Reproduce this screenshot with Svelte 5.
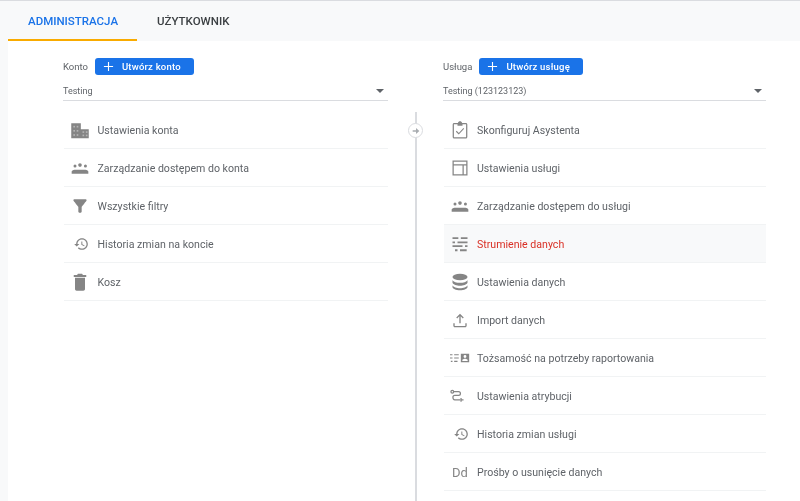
<script>
  const history =
    '<g transform="translate(14 12) scale(.78) translate(-12.500 -12)"><path d="M13 3c-4.970 0-9 4.030-9 9H1l3.890 3.890.07.14L9 12H6c0-3.870 3.130-7 7-7s7 3.130 7 7-3.130 7-7 7c-1.930 0-3.680-.79-4.940-2.060l-1.420 1.420C8.270 19.990 10.510 21 13 21c4.970 0 9-4.030 9-9s-4.030-9-9-9zm-1 5v5l4.280 2.540.72-1.210-3.500-2.080V8H12z"/></g>';
  const people =
    '<circle cx="12" cy="8.500" r="2.200"/><circle cx="6" cy="9.500" r="1.800"/><circle cx="18.500" cy="9.500" r="1.800"/><path d="M2 19v-2.500c0-1.100 1.500-2 3.500-2.300h13c2 .3 3.500 1.200 3.500 2.300V19z"/>';

  const icons = {
    building:
      '<path d="M1.500 4v18h21V11H13V4z"/><g fill="#b4b4b4"><rect x="4" y="7" width="2" height="2"/><rect x="8" y="7" width="2" height="2"/><rect x="4" y="12" width="2" height="2"/><rect x="8" y="12" width="2" height="2"/><rect x="4" y="17" width="2" height="2"/><rect x="8" y="17" width="2" height="2"/><rect x="15" y="13.500" width="2" height="2"/><rect x="19" y="13.500" width="2" height="2"/><rect x="15" y="17.500" width="2" height="2"/><rect x="19" y="17.500" width="2" height="2"/></g>',
    people,
    filter:
      '<path d="M4.250 5.610C6.270 8.200 10 13 10 13v6c0 .55.45 1 1 1h2c.55 0 1-.45 1-1v-6s3.720-4.800 5.740-7.390c.51-.66.04-1.610-.79-1.610H5.040c-.83 0-1.300.95-.79 1.610z"/>',
    history,
    trash:
      '<path d="M6 20.500c0 1.100.9 2 2 2h8c1.100 0 2-.9 2-2V7H6zM19.500 3.500h-4l-1-1.500h-5l-1 1.500h-4V6h15z"/>',
    clipboard:
      '<path d="M19 3.500h-4.500C14.200 2.300 13.200 1.500 12 1.500s-2.200.8-2.500 2H5c-1 0-1.800.8-1.800 1.800v15c0 1 .8 1.800 1.800 1.800h14c1 0 1.800-.8 1.800-1.800v-15c0-1-.8-1.800-1.800-1.800zm.3 17.100H4.700V5H9v2h6V5h4.300z"/><path d="M7.500 13.500l3 3 6-6.500" fill="none" stroke="currentColor" stroke-width="1.300"/>',
    layout:
      '<path d="M3 3h18v18H3zm1.500 1.500v3h15v-3zm0 4.500v10.500h10.500V9zm12 0v10.500h3V9z" fill-rule="evenodd"/>',
    streams:
      '<g fill="none" stroke="currentColor" stroke-width="2.200"><path d="M3 5h7M13 5h8M3 10h3M9 10h12M3 14.500h12M18 14.500h3M6 19.500h3M12 19.500h8"/></g>',
    database:
      '<ellipse cx="12" cy="6" rx="9" ry="4"/><path d="M3 9.500C4 12 8 13 12 13s8-1 9-3.500V13c-1 2.500-5 3.500-9 3.500S4 15.500 3 13zM3 16c1 2.500 5 3.500 9 3.500s8-1 9-3.500v2c0 2.200-4 4-9 4s-9-1.800-9-4z"/>',
    upload:
      '<path d="M12 4.500L7.500 9l1.100 1.100 2.600-2.600V16h1.600V7.500l2.600 2.600L16.500 9zM4 16v3c0 1 .8 1.800 1.800 1.800h12.400c1 0 1.800-.8 1.800-1.800v-3h-1.600v3.200H5.600V16z"/>',
    identity:
      '<g fill="none" stroke="currentColor" stroke-width="1.300"><path d="M0 8h3M5 8h5.500M0 12h3M5 12h5.500M1 16h2M5 16h4"/></g><path fill-rule="evenodd" d="M13 7h10v10H13zm5 1.500a1.700 1.700 0 100 3.400 1.700 1.700 0 000-3.400zM14.800 15.500h6.400v-.8c0-1-2.200-1.700-3.200-1.700s-3.200.7-3.200 1.700z"/>',
    attribution:
      '<g transform="translate(-1 3) scale(.75)"><g fill="none" stroke="currentColor" stroke-width="2"><circle cx="5" cy="5" r="2.200"/><path d="M7.500 5H15c2 0 3 1.300 3 3s-1 3-3 3H9c-2 0-3 1.300-3 3s1 4 3 4h9"/></g><path d="M18 15h2v2h3v2h-3v2h-2z"/></g>'
  };

  const accountItems = [
    { icon: "building", label: "Ustawienia konta" },
    { icon: "people", label: "Zarządzanie dostępem do konta" },
    { icon: "filter", label: "Wszystkie filtry" },
    { icon: "history", label: "Historia zmian na koncie" },
    { icon: "trash", label: "Kosz" }
  ];

  const propertyItems = [
    { icon: "clipboard", label: "Skonfiguruj Asystenta" },
    { icon: "layout", label: "Ustawienia usługi" },
    { icon: "people", label: "Zarządzanie dostępem do usługi" },
    { icon: "streams", label: "Strumienie danych", active: true },
    { icon: "database", label: "Ustawienia danych" },
    { icon: "upload", label: "Import danych" },
    { icon: "identity", label: "Tożsamość na potrzeby raportowania" },
    { icon: "attribution", label: "Ustawienia atrybucji" },
    { icon: "history", label: "Historia zmian usługi" },
    { text: "Dd", label: "Prośby o usunięcie danych" }
  ];

  const columns = [
    { title: "Konto", action: "Utwórz konto", value: "Testing", items: accountItems },
    { title: "Usługa", action: "Utwórz usługę", value: "Testing (123123123)", items: propertyItems }
  ];
</script>

{#snippet column(col)}
  <section class="column">
    <div class="head">
      <span class="title">{col.title}</span>
      <button class="create" type="button">
        <svg class="plus" viewBox="0 0 12 12"><path d="M6 1v10M1 6h10" /></svg>
        {col.action}
      </button>
    </div>
    <div class="picker">
      <span>{col.value}</span>
      <i class="caret"></i>
    </div>
    <ul>
      {#each col.items as item}
        <li class:active={item.active}>
          <span class="icon">
            {#if item.text}
              {item.text}
            {:else}
              <svg viewBox="0 0 24 24" fill="currentColor">{@html icons[item.icon]}</svg>
            {/if}
          </span>
          {item.label}
        </li>
      {/each}
    </ul>
  </section>
{/snippet}

<div class="page">
  <nav class="tabs">
    <a class="tab selected" href="#admin">ADMINISTRACJA</a>
    <a class="tab" href="#user">UŻYTKOWNIK</a>
  </nav>
  <main class="content">
    {@render column(columns[0])}
    <div class="rail">
      <span class="line"></span>
      <span class="arrow">
        <svg viewBox="0 0 12 12"><path d="M2 5h4V2.500L10 6 6 9.500V7H2z" /></svg>
      </span>
    </div>
    {@render column(columns[1])}
  </main>
</div>

<style>
  :global(body) {
    margin: 0;
    background: #f8f9fa;
  }

  .page {
    height: 501px;
    overflow: hidden;
    display: flex;
    flex-direction: column;
    font-family: Roboto, "Liberation Sans", sans-serif;
    color: #5f6368;
    filter: blur(0.5px);
  }

  .tabs {
    height: 41px;
    box-sizing: border-box;
    border-top: 1px solid #dadce0;
    display: flex;
    background: #f8f9fa;
  }

  .tab {
    box-sizing: border-box;
    height: 40px;
    padding: 12px 20px 0;
    font-size: 11.500px;
    font-weight: 500;
    line-height: 16px;
    color: #3c4043;
    text-decoration: none;
  }

  .tab.selected {
    width: 129px;
    margin-left: 8px;
    color: #1a73e8;
    border-bottom: 2px solid #f9ab00;
  }

  .content {
    flex: 1;
    margin-left: 8px;
    padding: 0 34px 0 55px;
    background: #fff;
    display: grid;
    grid-template-columns: 325px 55px 323px;
  }

  .head {
    height: 17px;
    margin-top: 17px;
    display: flex;
    align-items: center;
    gap: 7px;
  }

  .title {
    font-size: 9.500px;
  }

  .create {
    height: 17px;
    display: flex;
    align-items: center;
    padding: 0 13px 0 8px;
    gap: 8px;
    border: 0;
    border-radius: 3px;
    background: #1a73e8;
    color: #fff;
    font: 500 9.500px Roboto, sans-serif;
    letter-spacing: 0.2px;
  }

  .plus {
    width: 11px;
    height: 11px;
    fill: none;
    stroke: #fff;
    stroke-width: 1.200;
  }

  .picker {
    height: 26px;
    box-sizing: border-box;
    border-bottom: 1px solid #dadce0;
    display: flex;
    align-items: center;
    justify-content: space-between;
    padding: 6px 4px 0 0;
    font-size: 9px;
  }

  .caret {
    width: 0;
    height: 0;
    border: solid transparent;
    border-width: 4.500px 4.500px 0;
    border-top-color: #5f6368;
  }

  ul {
    list-style: none;
    margin: 10px 0 0 1px;
    padding: 0;
  }

  li {
    height: 38px;
    box-sizing: border-box;
    border-bottom: 1px solid #f1f3f4;
    padding-top: 1px;
    display: flex;
    align-items: center;
    padding-left: 5px;
    gap: 8px;
    font-size: 10.600px;
  }

  .column:first-child li {
    gap: 8.500px;
  }

  li.active {
    background: #f8f9fa;
    color: #d93025;
  }

  .icon {
    width: 20px;
    height: 20px;
    display: flex;
    align-items: center;
    justify-content: center;
    color: #858585;
    font-size: 13px;
    padding-left: 1px;
    margin-right: -1px;
  }

  .icon svg {
    width: 20px;
    height: 20px;
    margin-left: -1px;
  }

  .rail {
    position: relative;
    display: flex;
    justify-content: center;
    padding-top: 71px;
    margin-left: 1px;
  }

  .line {
    width: 1.500px;
    background: #dadce0;
  }

  .arrow {
    position: absolute;
    top: 82px;
    left: 19px;
    box-sizing: border-box;
    width: 15px;
    height: 15px;
    border: 1px solid #dadce0;
    border-radius: 50%;
    background: #fff;
    display: flex;
    align-items: center;
    justify-content: center;
  }

  .arrow svg {
    width: 10px;
    height: 10px;
    fill: #a8acb0;
  }
</style>
